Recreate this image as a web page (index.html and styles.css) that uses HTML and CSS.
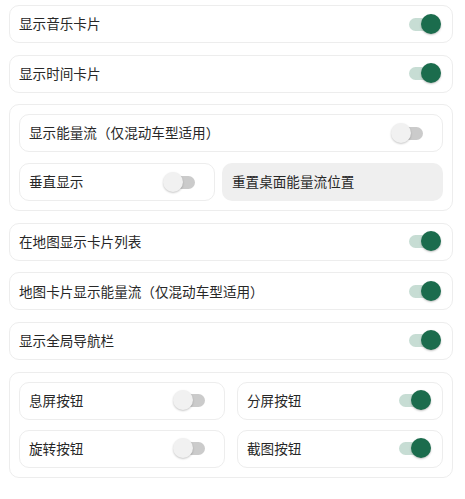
FILE: index.html
```html
<!DOCTYPE html>
<html lang="zh">
<head>
<meta charset="utf-8">
<link rel="stylesheet" href="styles.css">
</head>
<body>
<div class="page">
  <div class="card row"><span class="label">显示音乐卡片</span><span class="switch on"><span class="thumb"></span></span></div>
  <div class="card row"><span class="label">显示时间卡片</span><span class="switch on"><span class="thumb"></span></span></div>
  <div class="card group">
    <div class="card row"><span class="label">显示能量流（仅混动车型适用）</span><span class="switch off"><span class="thumb"></span></span></div>
    <div class="split">
      <div class="card row"><span class="label">垂直显示</span><span class="switch off"><span class="thumb"></span></span></div>
      <div class="button row"><span class="label">重置桌面能量流位置</span></div>
    </div>
  </div>
  <div class="card row"><span class="label">在地图显示卡片列表</span><span class="switch on"><span class="thumb"></span></span></div>
  <div class="card row"><span class="label">地图卡片显示能量流（仅混动车型适用）</span><span class="switch on"><span class="thumb"></span></span></div>
  <div class="card row"><span class="label">显示全局导航栏</span><span class="switch on"><span class="thumb"></span></span></div>
  <div class="card group">
    <div class="grid">
      <div class="card row"><span class="label">息屏按钮</span><span class="switch off"><span class="thumb"></span></span></div>
      <div class="card row"><span class="label">分屏按钮</span><span class="switch on"><span class="thumb"></span></span></div>
      <div class="card row"><span class="label">旋转按钮</span><span class="switch off"><span class="thumb"></span></span></div>
      <div class="card row"><span class="label">截图按钮</span><span class="switch on"><span class="thumb"></span></span></div>
    </div>
  </div>
</div>
</body>
</html>
```

FILE: styles.css
```css
* { box-sizing: border-box; }
html, body { margin: 0; padding: 0; background: #ffffff; }
body {
  font-family: "Noto Sans CJK SC", "Noto Sans", sans-serif;
  color: #272727;
}
.page {
  width: 465px;
  padding: 5px 12px 0 9px;
  display: flex;
  flex-direction: column;
  gap: 11.6px;
}
.card {
  background: #ffffff;
  border: 1px solid #ededed;
  border-radius: 10px;
}
.row {
  height: 38px;
  display: flex;
  align-items: center;
  justify-content: space-between;
  padding-left: 9px;
}
.label {
  font-size: 13.6px;
  line-height: 1;
  letter-spacing: 0;
}
.group {
  padding: 9px;
  display: flex;
  flex-direction: column;
  gap: 11px;
}
.split {
  display: flex;
  gap: 7px;
}
.split > .card { width: 196px; flex: none; }
.split > .button { flex: 1; }
.button {
  background: #efefef;
  border-radius: 10px;
  padding-left: 10px;
}
.grid {
  display: grid;
  grid-template-columns: 1fr 1fr;
  column-gap: 12px;
  row-gap: 10px;
}
.switch {
  position: relative;
  width: 28px;
  height: 13px;
  border-radius: 7px;
  flex: none;
}
.switch.on { background: #c7ddd4; margin-right: 15px; }
.switch.off { background: #cbcbcb; margin-right: 19px; }
.thumb {
  position: absolute;
  top: -4px;
  width: 20px;
  height: 20px;
  border-radius: 50%;
}
.switch.on .thumb {
  right: -4px;
  background: #1b6c4d;
  box-shadow: 0 1px 2px rgba(0,0,0,0.25);
}
.switch.off .thumb {
  left: -4px;
  background: #f1f1f1;
  box-shadow: 0 1px 2px rgba(0,0,0,0.22);
}
```
